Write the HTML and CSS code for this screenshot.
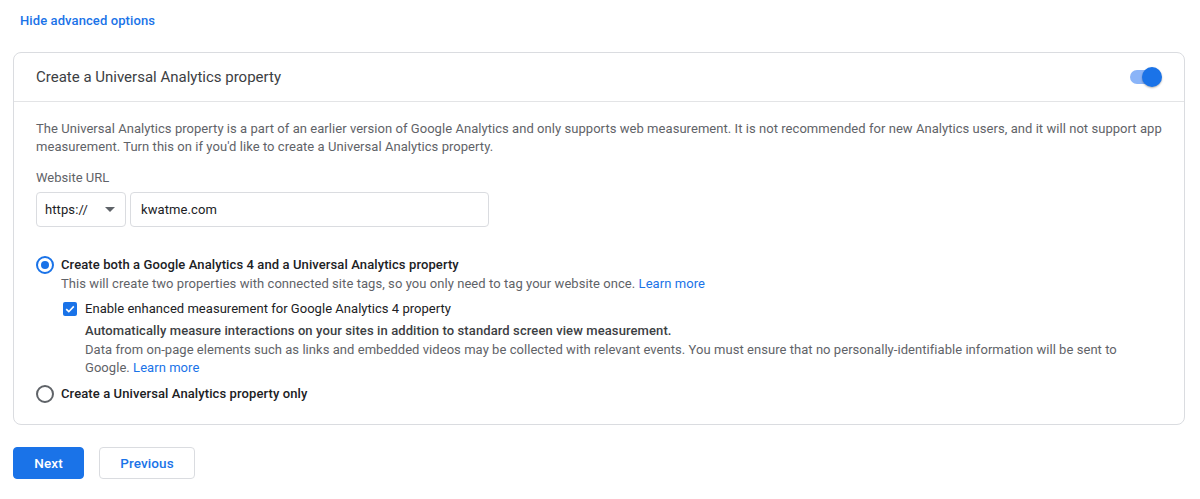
FILE: index.html
```html
<!DOCTYPE html>
<html>
<head>
<meta charset="utf-8">
<link rel="stylesheet" href="styles.css">
</head>
<body>
<div class="page">
  <a class="hide-link">Hide advanced options</a>
  <div class="card">
    <div class="card-head">
      <div class="card-title">Create a Universal Analytics property</div>
      <div class="toggle"><div class="track"></div><div class="knob"></div></div>
    </div>
    <div class="card-body">
      <p class="desc">The Universal Analytics property is a part of an earlier version of Google Analytics and only supports web measurement. It is not recommended for new Analytics users, and it will not support app measurement. Turn this on if you'd like to create a Universal Analytics property.</p>
      <div class="label">Website URL</div>
      <div class="url-row">
        <div class="select"><span>https://</span><span class="caret"></span></div>
        <div class="input">kwatme.com</div>
      </div>
      <div class="radio-row">
        <span class="radio checked"></span>
        <div class="radio-content">
          <div class="radio-label">Create both a Google Analytics 4 and a Universal Analytics property</div>
          <div class="sub">This will create two properties with connected site tags, so you only need to tag your website once. <a class="link">Learn more</a></div>
          <div class="check-row">
            <span class="checkbox"><svg width="12" height="12" viewBox="0 0 12 12"><path d="M2.2 6.2 L4.8 8.7 L9.8 3.4" fill="none" stroke="#fff" stroke-width="1.6"/></svg></span>
            <div class="check-content">
              <div class="check-label">Enable enhanced measurement for Google Analytics 4 property</div>
              <div class="check-bold">Automatically measure interactions on your sites in addition to standard screen view measurement.</div>
              <div class="check-desc">Data from on-page elements such as links and embedded videos may be collected with relevant events. You must ensure that no personally-identifiable information will be sent to Google. <a class="link">Learn more</a></div>
            </div>
          </div>
        </div>
      </div>
      <div class="radio-row last">
        <span class="radio"></span>
        <div class="radio-content">
          <div class="radio-label">Create a Universal Analytics property only</div>
        </div>
      </div>
    </div>
  </div>
  <div class="buttons">
    <button class="btn primary">Next</button>
    <button class="btn secondary">Previous</button>
  </div>
</div>
</body>
</html>
```
FILE: styles.css
```css
* { box-sizing: border-box; }
body {
  margin: 0;
  font-family: Roboto, "Liberation Sans", Arial, sans-serif;
  color: #202124;
  background: #fff;
}
.page {
  padding: 13px 16px 0 13px;
}
.hide-link {
  display: block;
  margin-left: 7px;
  font-size: 13px;
  font-weight: 500;
  letter-spacing: 0.1px;
  color: #1a73e8;
  line-height: 16px;
  height: 16px;
}
.card {
  margin-top: 23px;
  border: 1px solid #dadce0;
  border-radius: 8px;
  width: 1172px;
}
.card-head {
  display: flex;
  align-items: center;
  justify-content: space-between;
  height: 49px;
  padding: 0 22px 0 22px;
  border-bottom: 1px solid #e3e4e6;
}
.card-title {
  font-size: 15px;
  color: #3c4043;
}
.toggle {
  position: relative;
  width: 36px;
  height: 20px;
}
.track {
  position: absolute;
  left: 4px;
  top: 3px;
  width: 30px;
  height: 14px;
  border-radius: 7px;
  background: #8ab4f8;
}
.knob {
  position: absolute;
  left: 16px;
  top: 0;
  width: 20px;
  height: 20px;
  border-radius: 50%;
  background: #1a73e8;
  box-shadow: 0 1px 2px rgba(0,0,0,0.3);
}
.card-body {
  padding: 18px 22px 21px 22px;
}
.desc {
  margin: 0;
  font-size: 13px;
  letter-spacing: 0.05px;
  line-height: 18px;
  color: #5f6368;
}
.label {
  margin-top: 14px;
  font-size: 13px;
  line-height: 16px;
  color: #5f6368;
}
.url-row {
  display: flex;
  gap: 4px;
  margin-top: 6px;
}
.select, .input {
  height: 35px;
  border: 1px solid #dadce0;
  border-radius: 4px;
  display: flex;
  align-items: center;
  font-size: 13px;
  letter-spacing: 0.1px;
  color: #202124;
}
.select {
  width: 90px;
  padding: 0 10px 0 8px;
  justify-content: space-between;
}
.caret {
  width: 0;
  height: 0;
  border-left: 5px solid transparent;
  border-right: 5px solid transparent;
  border-top: 5px solid #5f6368;
}
.input {
  width: 359px;
  padding: 0 10px;
}
.radio-row {
  display: flex;
  gap: 7px;
  margin-top: 30px;
}
.radio-row.last {
  margin-top: 9px;
}
.radio {
  flex: none;
  width: 18px;
  height: 18px;
  border: 2px solid #5f6368;
  border-radius: 50%;
  margin-top: -1px;
  position: relative;
}
.radio.checked {
  border-color: #1a73e8;
}
.radio.checked::after {
  content: "";
  position: absolute;
  left: 3px;
  top: 3px;
  width: 8px;
  height: 8px;
  border-radius: 50%;
  background: #1a73e8;
}
.radio-label {
  font-size: 13px;
  font-weight: 500;
  letter-spacing: 0.1px;
  line-height: 16px;
  color: #202124;
}
.sub {
  margin-top: 3px;
  font-size: 13px;
  letter-spacing: 0.06px;
  line-height: 16px;
  color: #5f6368;
}
.link {
  color: #1a73e8;
}
.check-row {
  display: flex;
  gap: 8px;
  margin-top: 9px;
  margin-left: 2px;
}
.checkbox {
  flex: none;
  width: 14px;
  height: 14px;
  background: #1a73e8;
  border-radius: 2px;
  display: flex;
  align-items: center;
  justify-content: center;
  margin-top: 1px;
}
.check-label {
  font-size: 13px;
  letter-spacing: 0.03px;
  line-height: 16px;
  color: #202124;
}
.check-bold {
  margin-top: 6px;
  font-size: 13px;
  font-weight: 500;
  letter-spacing: 0.1px;
  line-height: 16px;
  color: #3c4043;
}
.check-desc {
  margin-top: 2px;
  font-size: 13px;
  letter-spacing: 0.05px;
  line-height: 18px;
  color: #5f6368;
}
.buttons {
  display: flex;
  gap: 15px;
  margin-top: 22px;
}
.btn {
  height: 32px;
  border-radius: 4px;
  font-family: Roboto, "Liberation Sans", Arial, sans-serif;
  font-size: 13.5px;
  font-weight: 500;
  letter-spacing: 0.1px;
  cursor: pointer;
}
.btn.primary {
  width: 71px;
  background: #1a73e8;
  color: #fff;
  border: 1px solid #1a73e8;
}
.btn.secondary {
  width: 96px;
  background: #fff;
  color: #1a73e8;
  border: 1px solid #dadce0;
}
```
